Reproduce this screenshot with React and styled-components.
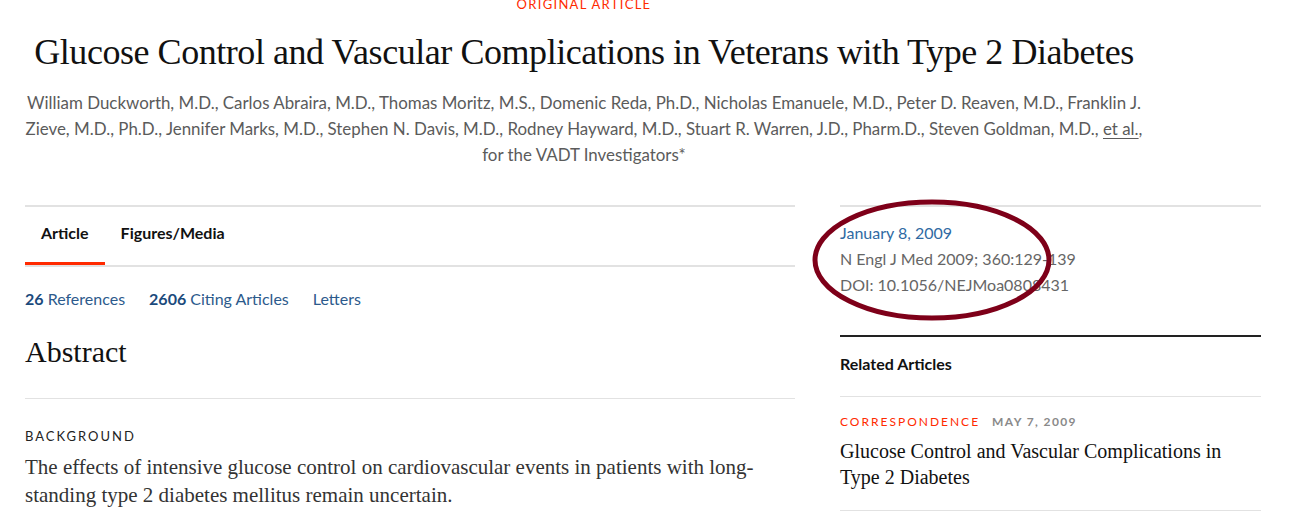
import React from 'react';
import styled, { createGlobalStyle } from 'styled-components';

const GlobalStyle = createGlobalStyle`
  html, body {
    margin: 0;
    padding: 0;
    background: #ffffff;
  }
  body {
    font-family: Lato, "Noto Sans", sans-serif;
    color: #222;
    overflow: hidden;
  }
`;

const sans = `Lato, "Noto Sans", sans-serif`;
const serif = `"Liberation Serif", "DejaVu Serif", serif`;

const Page = styled.div`
  width: 1295px;
  height: 528px;
  padding-left: 25px;
  box-sizing: border-box;
  overflow: hidden;
`;

const Header = styled.header`
  width: 1118px;
  text-align: center;
`;

const Kicker = styled.div`
  margin-top: -4px;
  font-family: ${sans};
  font-size: 13px;
  line-height: 16px;
  letter-spacing: 1.3px;
  color: #ff2a00;
  text-transform: uppercase;
`;

const Title = styled.h1`
  margin: 18px 0 0;
  font-family: ${serif};
  font-weight: 400;
  font-size: 36px;
  line-height: 44px;
  letter-spacing: -0.45px;
  color: #111;
`;

const Authors = styled.p`
  margin: 16px -12px 0;
  font-family: ${sans};
  font-size: 16.9px;
  line-height: 26px;
  color: #5b5b5b;

  u {
    text-underline-offset: 3px;
  }
`;

const Columns = styled.div`
  display: flex;
  gap: 45px;
  margin-top: 37px;
`;

const Main = styled.main`
  width: 770px;
  border-top: 2px solid #e2e2e2;
`;

const Tabs = styled.nav`
  display: flex;
  border-bottom: 2px solid #e2e2e2;
`;

const Tab = styled.div`
  padding: 15px 16px ${p => (p.$active ? '18px' : '21px')};
  font-family: ${sans};
  font-weight: 700;
  font-size: 16px;
  line-height: 22px;
  color: #111;
  border-bottom: ${p => (p.$active ? '3px solid #ff2a00' : '0')};
`;

const LinkRow = styled.div`
  display: flex;
  gap: 24px;
  margin-top: 21px;
  font-family: ${sans};
  font-size: 16px;
  line-height: 22px;
`;

const RowLink = styled.a`
  color: #2c5a8c;
  text-decoration: none;

  b {
    color: #1b4a7c;
    font-weight: 700;
  }
`;

const SectionTitle = styled.h2`
  margin: 24px 0 0;
  font-family: ${serif};
  font-weight: 400;
  font-size: 30px;
  line-height: 36px;
  color: #111;
`;

const Divider = styled.hr`
  margin: 28px 0 0;
  border: 0;
  border-top: 1px solid #e2e2e2;
`;

const Label = styled.h3`
  margin: 28px 0 0;
  font-family: ${sans};
  font-weight: 400;
  font-size: 13px;
  line-height: 18px;
  letter-spacing: 2px;
  color: #222;
  text-transform: uppercase;
`;

const Body = styled.p`
  margin: 8px 0 0;
  max-width: 745px;
  font-family: ${serif};
  font-size: 21px;
  line-height: 28px;
  color: #333;
`;

const Aside = styled.aside`
  position: relative;
  width: 421px;
  border-top: 2px solid #e2e2e2;
`;

const Meta = styled.div`
  padding-top: 13px;
  font-family: ${sans};
  font-size: 16px;
  line-height: 26px;
  color: #666;
`;

const MetaDate = styled.div`
  color: #2f6aa3;
`;

const Annotation = styled.svg`
  position: absolute;
  left: -29px;
  top: -8px;
  pointer-events: none;
`;

const RelatedHeader = styled.div`
  margin-top: 37px;
  padding: 16px 0 21px;
  border-top: 2px solid #222;
  border-bottom: 1px solid #e2e2e2;
  font-family: ${sans};
  font-weight: 700;
  font-size: 16px;
  line-height: 22px;
  color: #111;
`;

const RelatedItem = styled.div`
  padding: 17px 0 20px;
  border-bottom: 1px solid #e2e2e2;
`;

const ItemKicker = styled.div`
  display: flex;
  gap: 12px;
  font-family: ${sans};
  font-size: 12px;
  line-height: 16px;
  letter-spacing: 2px;
  text-transform: uppercase;
`;

const Kind = styled.span`
  color: #ff2a00;
`;

const ItemDate = styled.span`
  color: #8a8a8a;
  font-weight: 700;
  letter-spacing: 1.4px;
`;

const ItemTitle = styled.div`
  margin-top: 8px;
  max-width: 400px;
  font-family: ${serif};
  font-size: 20px;
  line-height: 26px;
  color: #111;
`;

export default function App() {
  return (
    <Page>
      <GlobalStyle />
      <Header>
        <Kicker>Original Article</Kicker>
        <Title>Glucose Control and Vascular Complications in Veterans with Type 2 Diabetes</Title>
        <Authors>
          William Duckworth, M.D., Carlos Abraira, M.D., Thomas Moritz, M.S., Domenic Reda, Ph.D., Nicholas
          Emanuele, M.D., Peter D. Reaven, M.D., Franklin J.
          <br />
          Zieve, M.D., Ph.D., Jennifer Marks, M.D., Stephen N. Davis, M.D., Rodney Hayward, M.D., Stuart R.
          Warren, J.D., Pharm.D., Steven Goldman, M.D., <u>et al.</u>,
          <br />
          for the VADT Investigators*
        </Authors>
      </Header>

      <Columns>
        <Main>
          <Tabs>
            <Tab $active>Article</Tab>
            <Tab>Figures/Media</Tab>
          </Tabs>
          <LinkRow>
            <RowLink href="#"><b>26</b> References</RowLink>
            <RowLink href="#"><b>2606</b> Citing Articles</RowLink>
            <RowLink href="#">Letters</RowLink>
          </LinkRow>
          <SectionTitle>Abstract</SectionTitle>
          <Divider />
          <Label>Background</Label>
          <Body>
            The effects of intensive glucose control on cardiovascular events in patients with long-standing
            type 2 diabetes mellitus remain uncertain.
          </Body>
        </Main>

        <Aside>
          <Meta>
            <MetaDate>January 8, 2009</MetaDate>
            <div>N Engl J Med 2009; 360:129-139</div>
            <div>DOI: 10.1056/NEJMoa0808431</div>
          </Meta>
          <Annotation width="244" height="124" viewBox="0 0 244 124">
            <ellipse cx="121" cy="61" rx="117" ry="58" fill="none" stroke="#7e0019" strokeWidth="5" />
          </Annotation>
          <RelatedHeader>Related Articles</RelatedHeader>
          <RelatedItem>
            <ItemKicker>
              <Kind>Correspondence</Kind>
              <ItemDate>May 7, 2009</ItemDate>
            </ItemKicker>
            <ItemTitle>Glucose Control and Vascular Complications in Type 2 Diabetes</ItemTitle>
          </RelatedItem>
        </Aside>
      </Columns>
    </Page>
  );
}
